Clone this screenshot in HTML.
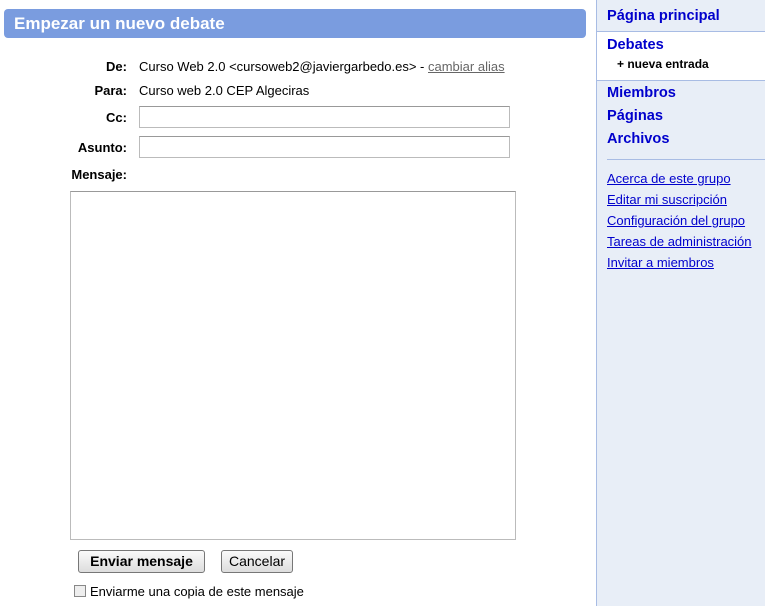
<!DOCTYPE html>
<html><head><style>
body{margin:0;width:765px;height:606px;background:#fff;font-family:"Liberation Sans",Arial,sans-serif;font-size:13px;position:relative;overflow:hidden;color:#000}
.a{position:absolute}
.hdr{left:4px;top:9px;width:582px;height:29px;background:#7a9cdf;border-radius:4px;color:#fff;font-weight:bold;font-size:17px;line-height:29px;padding-left:10px;box-sizing:border-box}
.lbl{font-weight:bold;text-align:right;width:60px;left:67px}
.inp{border:1px solid #bbb;border-top-color:#999;background:#fff;box-sizing:border-box}
.side{left:596px;top:0;width:169px;height:606px;background:#e8eef7;border-left:1px solid #a8bce4}
.nav{color:#0000cc;font-weight:bold;font-size:14.6px;left:10px}
.lk{color:#0000cc;text-decoration:underline;font-size:13px;left:10px}
.btn{border:1px solid #777;border-radius:3px;background:linear-gradient(#fafafa,#ddd);box-sizing:border-box;text-align:center;font-size:14px;line-height:20px}
</style></head><body>
<div class="a hdr">Empezar un nuevo debate</div>
<div class="a lbl" style="top:59px">De:</div>
<div class="a" style="left:139px;top:59px">Curso Web 2.0 &lt;cursoweb2@javiergarbedo.es&gt; - <span style="color:#666;text-decoration:underline">cambiar alias</span></div>
<div class="a lbl" style="top:83px">Para:</div>
<div class="a" style="left:139px;top:83px">Curso web 2.0 CEP Algeciras</div>
<div class="a lbl" style="top:110px">Cc:</div>
<div class="a inp" style="left:139px;top:106px;width:371px;height:22px"></div>
<div class="a lbl" style="top:140px">Asunto:</div>
<div class="a inp" style="left:139px;top:136px;width:371px;height:22px"></div>
<div class="a lbl" style="top:167px">Mensaje:</div>
<div class="a inp" style="left:70px;top:191px;width:446px;height:349px"></div>
<div class="a btn" style="left:78px;top:550px;width:127px;height:23px;font-weight:bold">Enviar mensaje</div>
<div class="a btn" style="left:221px;top:550px;width:72px;height:23px">Cancelar</div>
<div class="a" style="left:74px;top:585px;width:12px;height:12px;border:1px solid #888;background:#eee;box-sizing:border-box"></div>
<div class="a" style="left:90px;top:584px">Enviarme una copia de este mensaje</div>
<div class="a side">
<div class="a" style="left:0;top:31px;width:169px;height:48px;background:#fff;border-top:1px solid #a8bce4;border-bottom:1px solid #a8bce4"></div>
<div class="a nav" style="top:8px">Página principal</div>
<div class="a nav" style="top:37px">Debates</div>
<div class="a" style="left:20px;top:57px;font-weight:bold;font-size:12px">+ nueva entrada</div>
<div class="a nav" style="top:85px">Miembros</div>
<div class="a nav" style="top:108px">Páginas</div>
<div class="a nav" style="top:131px">Archivos</div>
<div class="a" style="left:10px;top:159px;width:159px;height:1px;background:#a8bce4"></div>
<div class="a lk" style="top:171px">Acerca de este grupo</div>
<div class="a lk" style="top:192px">Editar mi suscripción</div>
<div class="a lk" style="top:213px">Configuración del grupo</div>
<div class="a lk" style="top:234px">Tareas de administración</div>
<div class="a lk" style="top:255px">Invitar a miembros</div>
</div>
</body></html>
